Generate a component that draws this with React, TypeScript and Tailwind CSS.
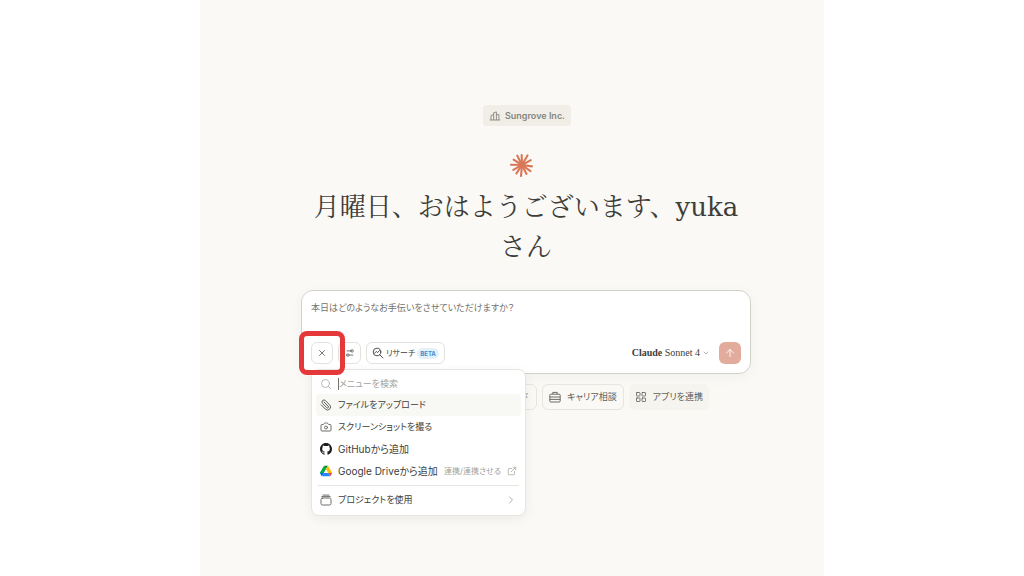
import type { ReactNode } from "react";
import {
  ArrowUp,
  Camera,
  ChevronDown,
  ChevronRight,
  ExternalLink,
  LayoutGrid,
  Paperclip,
  Search,
  Settings2,
  X,
} from "lucide-react";

const RAYS = [
  { angle: 8, length: 10 },
  { angle: 36, length: 10.5 },
  { angle: 63, length: 10 },
  { angle: 95, length: 11 },
  { angle: 124, length: 10 },
  { angle: 151, length: 10 },
  { angle: 181, length: 11 },
  { angle: 212, length: 10 },
  { angle: 243, length: 10.5 },
  { angle: 268, length: 10 },
  { angle: 300, length: 11 },
  { angle: 331, length: 10 },
];

function Starburst() {
  return (
    <svg viewBox="0 0 24 24" className="size-6" aria-hidden="true">
      <g stroke="#d97757" strokeWidth="2.1" strokeLinecap="round">
        {RAYS.map(({ angle, length }) => (
          <line key={angle} x1="12" y1="12" x2={12 + length} y2="12" transform={`rotate(${angle} 12 12)`} />
        ))}
      </g>
    </svg>
  );
}

function BuildingIcon() {
  return (
    <svg viewBox="0 0 12 12" className="size-3" fill="none" stroke="currentColor" strokeWidth="0.9" aria-hidden="true">
      <path d="M0.8 10H11.2M2 10V5.6l2.6-1M4.6 10V2.8L7.4 1.9V10M7.4 4.6h2.5V10" />
    </svg>
  );
}

function ResearchIcon() {
  return (
    <svg viewBox="0 0 12 12" className="size-3" fill="none" stroke="currentColor" strokeWidth="0.9" strokeLinecap="round" strokeLinejoin="round" aria-hidden="true">
      <circle cx="5" cy="5" r="3.8" />
      <path d="M7.8 7.8l3.2 3.2M2.6 6.2l1.7-1.8 1.3 1.2 1.8-2" />
    </svg>
  );
}

function BriefcaseIcon() {
  return (
    <svg viewBox="0 0 12 12" className="size-3" fill="none" stroke="currentColor" strokeWidth="0.9" strokeLinejoin="round" aria-hidden="true">
      <rect x="0.8" y="3.2" width="10.4" height="7.8" rx="1" />
      <path d="M3.8 3.2V1.4h4.4v1.8M0.8 6h10.4M0.8 8.4h10.4" />
    </svg>
  );
}

function GitHubIcon() {
  return (
    <svg viewBox="0 0 16 16" className="size-3" fill="#1b1b1a" aria-hidden="true">
      <path d="M8 0C3.58 0 0 3.58 0 8c0 3.54 2.29 6.53 5.47 7.59.4.07.55-.17.55-.38 0-.19-.01-.82-.01-1.49-2.01.37-2.53-.49-2.69-.94-.09-.23-.48-.94-.82-1.13-.28-.15-.68-.52-.01-.53.63-.01 1.08.58 1.23.82.72 1.21 1.87.87 2.33.66.07-.52.28-.87.51-1.07-1.78-.2-3.64-.89-3.64-3.95 0-.87.31-1.59.82-2.15-.08-.2-.36-1.02.08-2.12 0 0 .67-.21 2.2.82a7.6 7.6 0 0 1 4 0c1.53-1.04 2.2-.82 2.2-.82.44 1.1.16 1.92.08 2.12.51.56.82 1.27.82 2.15 0 3.07-1.87 3.75-3.65 3.95.29.25.54.73.54 1.48 0 1.07-.01 1.93-.01 2.2 0 .21.15.46.55.38A8.01 8.01 0 0 0 16 8c0-4.42-3.58-8-8-8z" />
    </svg>
  );
}

function DriveIcon() {
  return (
    <svg viewBox="0 0 87.3 78" className="size-3" aria-hidden="true">
      <path d="m6.6 66.85 3.85 6.65c.8 1.4 1.95 2.5 3.3 3.3l13.75-23.8h-27.5c0 1.55.4 3.1 1.2 4.5z" fill="#0066da" />
      <path d="m43.65 25-13.75-23.8c-1.35.8-2.5 1.9-3.3 3.3l-25.4 44a9.06 9.06 0 0 0-1.2 4.5h27.5z" fill="#00ac47" />
      <path d="m73.55 76.8c1.35-.8 2.5-1.9 3.3-3.3l1.6-2.75 7.65-13.25c.8-1.4 1.2-2.95 1.2-4.5h-27.5l5.85 11.5z" fill="#ea4335" />
      <path d="m43.65 25 13.75-23.8c-1.35-.8-2.9-1.2-4.5-1.2h-18.5c-1.6 0-3.15.45-4.5 1.2z" fill="#00832d" />
      <path d="m59.8 53h-32.3l-13.75 23.8c1.35.8 2.9 1.2 4.5 1.2h50.8c1.6 0 3.15-.45 4.5-1.2z" fill="#2684fc" />
      <path d="m73.4 26.5-12.7-22c-.8-1.4-1.95-2.5-3.3-3.3l-13.75 23.8 16.15 28h27.45c0-1.55-.4-3.1-1.2-4.5z" fill="#ffba00" />
    </svg>
  );
}

function ProjectIcon() {
  return (
    <svg viewBox="0 0 12 12" className="size-3" fill="none" stroke="currentColor" strokeWidth="0.9" strokeLinecap="round" aria-hidden="true">
      <rect x="1" y="4" width="10" height="7" rx="1.6" />
      <path d="M1.8 2.6h8.4M3 1.1h6" />
    </svg>
  );
}

interface MenuItemProps {
  icon: ReactNode;
  label: string;
  active?: boolean;
  large?: boolean;
  children?: ReactNode;
}

function MenuItem({ icon, label, active, large, children }: MenuItemProps) {
  return (
    <button
      type="button"
      role="menuitem"
      className={`flex h-[22px] w-full items-center gap-1.5 rounded px-1 text-left whitespace-nowrap text-[#3d3d3a] ${active ? "bg-[#f8f8f4]" : ""}`}
    >
      <span className="flex w-3 shrink-0 justify-center text-[#5e5d59]">{icon}</span>
      <span className={large ? "text-[10px]" : ""}>{label}</span>
      {children}
    </button>
  );
}

function AttachMenu() {
  return (
    <div
      role="menu"
      className="absolute top-full left-0 z-10 mt-[5px] w-[215px] rounded-lg border border-[#e6e5df] bg-white px-1 pt-1 pb-1 shadow-[0_3px_12px_rgba(0,0,0,0.06)]"
    >
      <label className="flex h-5 items-center gap-1.5 px-1">
        <Search className="size-3 shrink-0 text-[#a3a29b]" strokeWidth={1.5} />
        <input
          type="text"
          aria-label="メニューを検索"
          placeholder="メニューを検索"
          className="h-3 w-full min-w-0 border-l border-[#73726c] outline-none placeholder:text-[#a3a29b]"
        />
      </label>
      <MenuItem icon={<Paperclip className="size-3 -scale-x-100" strokeWidth={2} />} label="ファイルをアップロード" active />
      <MenuItem icon={<Camera className="size-3" strokeWidth={1.8} />} label="スクリーンショットを撮る" />
      <MenuItem icon={<GitHubIcon />} label="GitHubから追加" large />
      <MenuItem icon={<DriveIcon />} label="Google Driveから追加" large>
        <span className="ml-auto flex items-center gap-1.5 text-[8px] text-[#a3a29b]">
          連携/連携させる
          <ExternalLink className="size-2.5" strokeWidth={1.8} />
        </span>
      </MenuItem>
      <hr className="mx-0.5 my-[3px] border-[#e6e5df]" />
      <MenuItem icon={<ProjectIcon />} label="プロジェクトを使用">
        <ChevronRight className="ml-auto size-3 text-[#8f8e87]" strokeWidth={1.5} />
      </MenuItem>
    </div>
  );
}

function Composer() {
  return (
    <form className="flex w-full flex-col rounded-xl border border-[#d3d2ca] bg-white px-[9px] py-[9px] shadow-[0_3px_14px_rgba(0,0,0,0.04)]">
      <textarea
        aria-label="メッセージ"
        rows={1}
        placeholder="本日はどのようなお手伝いをさせていただけますか？"
        className="h-[42px] w-full resize-none leading-4 outline-none placeholder:text-[#73726c]"
      />
      <div className="flex items-center gap-[5px]">
        <div className="relative">
          <button type="button" aria-label="メニューを閉じる" className="flex size-[22px] items-center justify-center rounded-md border border-[#e3e2dc] text-[#5e5d59]">
            <X className="size-2.5" strokeWidth={2} />
          </button>
          <AttachMenu />
          <div className="pointer-events-none absolute -inset-x-3 -inset-y-[11px] z-20 rounded-lg border-5 border-[#e5383b]" />
        </div>
        <button type="button" aria-label="設定" className="flex h-[22px] w-[23px] items-center justify-center rounded-md border border-[#e3e2dc] text-[#5e5d59]">
          <Settings2 className="size-2.5 -scale-x-100" strokeWidth={2} />
        </button>
        <button type="button" className="flex h-[22px] items-center gap-0.5 rounded-md border border-[#e3e2dc] px-[5px] text-[8px] text-[#3d3d3a]">
          <ResearchIcon />
          リサーチ
          <span className="rounded-full bg-[#e4f1fb] px-[3px] text-[6px] leading-[11px] font-bold text-[#3b8fd0]">BETA</span>
        </button>
        <button type="button" className="ml-auto flex items-center gap-0.5 font-['Liberation_Serif',serif] text-[10px] text-[#3d3d3a]">
          <span><span className="font-bold">Claude</span> Sonnet 4</span>
          <ChevronDown className="size-2 text-[#8f8e87]" />
        </button>
        <button type="submit" aria-label="送信" className="ml-1 flex size-[22px] items-center justify-center rounded-md bg-[#e3ab9b] text-white">
          <ArrowUp className="size-3" strokeWidth={1.8} />
        </button>
      </div>
    </form>
  );
}

export default function App() {
  return (
    <div className="min-h-screen bg-white font-[Inter,'Noto_Sans_CJK_JP',sans-serif] text-[9px] leading-4 [font-feature-settings:'palt']">
      <main className="mx-auto flex min-h-screen w-[61%] flex-col items-center bg-[#faf9f5] pt-[105px] pl-7">
        <div className="ml-0.5 flex h-[21px] items-center gap-1 rounded bg-[#f0eee6] px-1.5 font-semibold text-[#87867f]">
          <BuildingIcon />
          Sungrove Inc.
        </div>
        <div className="mt-[27px] mr-2">
          <Starburst />
        </div>
        <div className="flex w-[75%] min-w-[450px] flex-col">
          <h1 className="mt-2.5 text-center font-['DejaVu_Serif','Noto_Serif_CJK_JP','Noto_Sans_CJK_JP',serif] text-[26px] leading-10 font-normal text-[#3d3d3a] [font-feature-settings:normal]">
            月曜日、おはようございます、yukaさん
          </h1>
          <div className="mt-[23px]">
            <Composer />
          </div>
          <div className="mt-2.5 flex justify-end gap-[5px] pr-[42px] text-[#5e5d59]">
            <button type="button" className="h-[26px] rounded-md border border-[#e6e5df] px-2">
              コード
            </button>
            <button type="button" className="flex h-[26px] items-center gap-1.5 rounded-md border border-[#e6e5df] px-1.5">
              <BriefcaseIcon />
              キャリア相談
            </button>
            <button type="button" className="flex h-[26px] items-center gap-1.5 rounded-md bg-[#f5f4ee] px-1.5">
              <LayoutGrid className="size-3" strokeWidth={1.6} />
              アプリを連携
            </button>
          </div>
        </div>
      </main>
    </div>
  );
}
